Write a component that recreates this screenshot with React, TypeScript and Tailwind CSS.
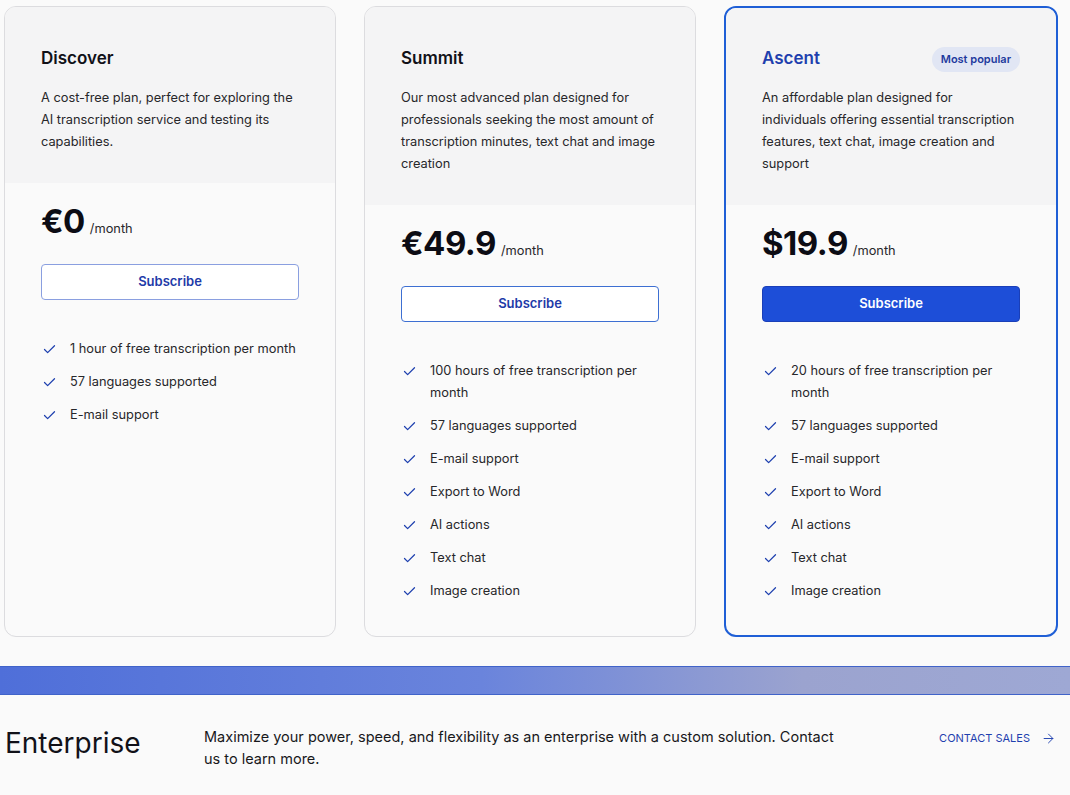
import { Check, ArrowRight } from "lucide-react";

type Plan = {
    name: string;
    description: string;
    price: string;
    features: string[];
    popular?: boolean;
};

const plans: Plan[] = [
    {
        name: "Discover",
        description:
            "A cost-free plan, perfect for exploring the AI transcription service and testing its capabilities.",
        price: "€0",
        features: [
            "1 hour of free transcription per month",
            "57 languages supported",
            "E-mail support",
        ],
    },
    {
        name: "Summit",
        description:
            "Our most advanced plan designed for professionals seeking the most amount of transcription minutes, text chat and image creation",
        price: "€49.9",
        features: [
            "100 hours of free transcription per month",
            "57 languages supported",
            "E-mail support",
            "Export to Word",
            "AI actions",
            "Text chat",
            "Image creation",
        ],
    },
    {
        name: "Ascent",
        description:
            "An affordable plan designed for individuals offering essential transcription features, text chat, image creation and support",
        price: "$19.9",
        features: [
            "20 hours of free transcription per month",
            "57 languages supported",
            "E-mail support",
            "Export to Word",
            "AI actions",
            "Text chat",
            "Image creation",
        ],
        popular: true,
    },
];

const PlanCard = ({ plan, outline }: { plan: Plan; outline: string }) => {
    return (
        <div
            className={
                plan.popular
                    ? "flex flex-col overflow-hidden rounded-xl border-2 border-[#1f5fd6] bg-[#fafafa]"
                    : "flex flex-col overflow-hidden rounded-xl border border-[#dcdcdf] bg-[#fafafa]"
            }
        >
            <div className={plan.popular ? "bg-[#f4f4f5] px-[36px] pt-[39px] pb-[30px]" : "bg-[#f4f4f5] px-[36px] pt-[40px] pb-[30px]"}>
                <div className="flex h-[24px] items-center justify-between">
                    <h3
                        className={
                            plan.popular
                                ? "text-[17px] font-semibold text-[#1e3fae]"
                                : "text-[17px] font-semibold text-[#111118]"
                        }
                    >
                        {plan.name}
                    </h3>
                    {plan.popular && (
                        <span className="rounded-full bg-[#e1e6f4] px-[9px] py-[5px] text-[11px] font-semibold leading-[15px] text-[#1e3a9e]">
                            Most popular
                        </span>
                    )}
                </div>
                <p className="mt-4 text-[12.8px] leading-[22px] text-[#27272a]">
                    {plan.description}
                </p>
            </div>

            <div className="px-[36px] pt-[20px] pb-[33px]">
                <div className="flex items-baseline gap-[5px] leading-[36px]">
                    <span className="text-[33px] font-bold tracking-[-0.5px] text-[#0c0c14]">
                        {plan.price}
                    </span>
                    <span className="text-[12.8px] text-[#27272a]">/month</span>
                </div>

                <button
                    className={
                        plan.popular
                            ? "mt-[17px] h-[36px] w-full rounded-[4px] border border-[#1a3fb8] bg-[#1d4ed8] text-[13px] font-semibold text-white"
                            : `mt-[17px] h-[36px] w-full rounded-[4px] border bg-white text-[13px] font-semibold text-[#1e3aa8] ${outline}`
                    }
                >
                    Subscribe
                </button>

                <ul className="mt-[38px] flex flex-col gap-[11px]">
                    {plan.features.map((f) => (
                        <li key={f} className="flex items-start gap-[13px] text-[12.8px] leading-[22px] text-[#27272a]">
                            <Check className="mt-[4px] ml-[1px] h-[15px] w-[15px] shrink-0 text-[#1e40af]" strokeWidth={2} />
                            <span>{f}</span>
                        </li>
                    ))}
                </ul>
            </div>
        </div>
    );
};

export default function App() {
    return (
        <div className="min-h-[795px] bg-[#fafafa] font-['Inter',sans-serif]">
            <div className="grid grid-cols-[332px_332px_334px] items-stretch gap-[28px] pl-[4px] pt-[6px]">
                <PlanCard plan={plans[0]} outline="border-[#8a9fe0]" />
                <PlanCard plan={plans[1]} outline="border-[#3d6fd2]" />
                <PlanCard plan={plans[2]} outline="" />
            </div>

            <div className="mt-[29px] h-[29px] border-y border-y-[#4063c9] bg-[linear-gradient(90deg,#4f6fd9_0%,#6a84dc_45%,#9ba3cf_75%,#9ea8d4_100%)]" />

            <div className="flex items-start px-[5px] pt-[30px]">
                <h2 className="w-[199px] text-[28px] leading-[36px] font-normal text-[#111118]">Enterprise</h2>
                <p className="mt-[1px] w-[640px] text-[14.5px] leading-[22px] text-[#18181b]">
                    Maximize your power, speed, and flexibility as an enterprise with a custom solution. Contact us to learn more.
                </p>
                <a className="ml-auto mr-[9px] mt-[2px] flex items-center gap-[11px] text-[11px] leading-[22px] text-[#1e40af]">
                    CONTACT SALES
                    <ArrowRight className="h-[15px] w-[15px]" strokeWidth={1.5} />
                </a>
            </div>
        </div>
    );
}
